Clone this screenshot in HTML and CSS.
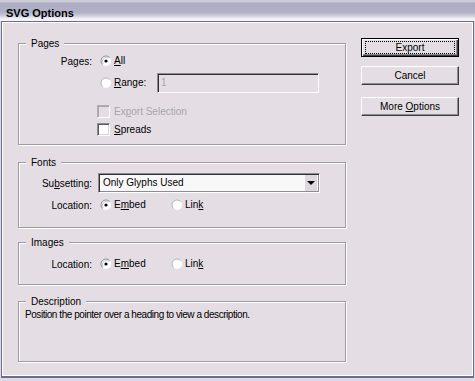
FILE: index.html
```html
<!DOCTYPE html>
<html>
<head>
<meta charset="utf-8">
<title>SVG Options</title>
<link rel="stylesheet" href="styles.css">
</head>
<body>
<div class="window">
  <div class="titlebar">SVG Options</div>
  <div class="frame">
    <div class="main">
      <fieldset class="group g-pages">
        <legend>Pages</legend>
        <div class="row h16">
          <span class="lbl">Pages:</span>
          <span class="radio"><svg width="12" height="12" viewBox="0 0 12 12"><circle cx="6" cy="6" r="5" fill="#fff"/><path d="M2.46 9.54 A5 5 0 0 1 9.54 2.46" fill="none" stroke="#8c8a92" stroke-width="1"/><path d="M3.2 8.8 A4 4 0 0 1 8.8 3.2" fill="none" stroke="#c8c6cc" stroke-width="1"/><circle cx="6" cy="6" r="1.6" fill="#000"/></svg></span>
          <span class="txt"><u>A</u>ll</span>
        </div>
        <div class="row h20 ind-radio range">
          <span class="radio"><svg width="12" height="12" viewBox="0 0 12 12"><circle cx="6" cy="6" r="5" fill="#fff"/><path d="M2.46 9.54 A5 5 0 0 1 9.54 2.46" fill="none" stroke="#b4b2b8" stroke-width="1"/></svg></span>
          <span class="txt rangelbl"><u>R</u>ange:</span>
          <span class="field">1</span>
        </div>
        <div class="row h13 ind-cb cb-first disabled">
          <span class="cb off"></span>
          <span class="txt">Ex<u>p</u>ort Selection</span>
        </div>
        <div class="row h13 ind-cb cb-second">
          <span class="cb"></span>
          <span class="txt"><u>S</u>preads</span>
        </div>
      </fieldset>

      <fieldset class="group g-fonts">
        <legend>Fonts</legend>
        <div class="row h20">
          <span class="lbl lbl-select">Su<u>b</u>setting:</span>
          <div class="select">
            <span class="select-text">Only Glyphs Used</span>
            <span class="select-btn"><span class="arrow"></span></span>
          </div>
        </div>
        <div class="row h16 loc-row">
          <span class="lbl">Location:</span>
          <span class="radio"><svg width="12" height="12" viewBox="0 0 12 12"><circle cx="6" cy="6" r="5" fill="#fff"/><path d="M2.46 9.54 A5 5 0 0 1 9.54 2.46" fill="none" stroke="#8c8a92" stroke-width="1"/><path d="M3.2 8.8 A4 4 0 0 1 8.8 3.2" fill="none" stroke="#c8c6cc" stroke-width="1"/><circle cx="6" cy="6" r="1.6" fill="#000"/></svg></span>
          <span class="txt embed">E<u>m</u>bed</span>
          <span class="radio"><svg width="12" height="12" viewBox="0 0 12 12"><circle cx="6" cy="6" r="5" fill="#fff"/><path d="M2.46 9.54 A5 5 0 0 1 9.54 2.46" fill="none" stroke="#b4b2b8" stroke-width="1"/></svg></span>
          <span class="txt">Lin<u>k</u></span>
        </div>
      </fieldset>

      <fieldset class="group g-images">
        <legend>Images</legend>
        <div class="row h16">
          <span class="lbl">Location:</span>
          <span class="radio"><svg width="12" height="12" viewBox="0 0 12 12"><circle cx="6" cy="6" r="5" fill="#fff"/><path d="M2.46 9.54 A5 5 0 0 1 9.54 2.46" fill="none" stroke="#8c8a92" stroke-width="1"/><path d="M3.2 8.8 A4 4 0 0 1 8.8 3.2" fill="none" stroke="#c8c6cc" stroke-width="1"/><circle cx="6" cy="6" r="1.6" fill="#000"/></svg></span>
          <span class="txt embed">E<u>m</u>bed</span>
          <span class="radio"><svg width="12" height="12" viewBox="0 0 12 12"><circle cx="6" cy="6" r="5" fill="#fff"/><path d="M2.46 9.54 A5 5 0 0 1 9.54 2.46" fill="none" stroke="#b4b2b8" stroke-width="1"/></svg></span>
          <span class="txt">Lin<u>k</u></span>
        </div>
      </fieldset>

      <fieldset class="group g-desc">
        <legend>Description</legend>
        <p class="desc">Position the pointer over a heading to view a description.</p>
      </fieldset>
    </div>

    <div class="buttons">
      <div class="btn default"><div class="focus">Export</div></div>
      <div class="btn cancel">Cancel</div>
      <div class="btn more"><span>More <u>O</u>ptions</span></div>
    </div>
  </div>
</div>
</body>
</html>
```
FILE: styles.css
```css
html, body {
  margin: 0;
  padding: 0;
}
body {
  background: #dedae4;
  font-family: "Liberation Sans", Arial, sans-serif;
  font-size: 10px;
  color: #000;
}
.window {
  width: 475px;
  height: 381px;
  display: flex;
  flex-direction: column;
}
.titlebar {
  height: 21px;
  box-sizing: border-box;
  padding: 5px 0 0 6px;
  font-size: 11px;
  font-weight: bold;
  line-height: 16px;
  color: #000;
  background: linear-gradient(to bottom,
    #cbcbd6 0px, #cbcbd6 2px,
    #acacc2 3px, #b0b0c6 12px,
    #c6c6d5 15px, #dcdce6 17px,
    #f4f4f8 19px, #f4f4f8 21px);
}
.frame {
  margin: 0 1px;
  height: 357px;
  box-sizing: border-box;
  border: 1px solid #6c6c8c;
  border-bottom-width: 2px;
  box-shadow: inset 1px 1px 0 #fff, inset -1px -1px 0 #fff;
  background: #e4dee4;
  display: flex;
  padding: 15px 0 0 16px;
}
.main {
  width: 328px;
  display: flex;
  flex-direction: column;
}
.group {
  margin: 0;
  padding: 0;
  min-width: 0;
  border: 1px solid #9e9ba2;
  box-shadow: 1px 1px 0 #fff, inset 1px 1px 0 #fff;
}
.group legend {
  margin-left: 7px;
  padding: 0 5px;
  height: 13px;
  line-height: 13px;
  background: #e4dee4;
}
.g-pages { padding: 3px 0 8px; }
.g-fonts { margin-top: 11px; padding: 4px 0 14px; }
.g-fonts .loc-row { margin-top: 4px; }
.g-images { margin-top: 8px; padding: 7px 0 12px; }
.g-desc { margin-top: 10px; padding: 1px 0 40px; }

.row {
  display: flex;
  align-items: center;
  white-space: nowrap;
}
.h16 { height: 16px; }
.h20 { height: 20px; }
.h13 { height: 13px; }
.range { margin-top: 4px; }
.cb-first { margin-top: 12px; }
.cb-second { margin-top: 5px; }
.ind-radio { padding-left: 81px; }
.ind-cb { padding-left: 78px; }

.lbl {
  width: 73px;
  text-align: right;
  margin-right: 8px;
  flex: none;
}
.lbl-select { margin-right: 6px; }
.radio {
  width: 12px;
  height: 12px;
  flex: none;
  display: block;
  margin-right: 2px;
}
.radio svg { display: block; }
.txt { line-height: 12px; }
.rangelbl { width: 43px; }
.embed { width: 57px; }

.field {
  width: 162px;
  height: 20px;
  box-sizing: border-box;
  border: 1px solid;
  border-color: #8c8a92 #fff #fff #8c8a92;
  box-shadow: inset 1px 1px 0 #303030;
  color: #a8a4ac;
  padding-left: 3px;
  line-height: 18px;
}
.cb {
  width: 13px;
  height: 13px;
  box-sizing: border-box;
  flex: none;
  border: 1px solid;
  border-color: #8c8a92 #fff #fff #8c8a92;
  box-shadow: inset 1px 1px 0 #5a5860, inset -1px -1px 0 #d8d4dc;
  background: #fff;
  margin-right: 4px;
}
.cb.off {
  background: #e4dee4;
  border-color: #b0aeb4 #fff #fff #b0aeb4;
  box-shadow: inset 1px 1px 0 #a8a6ac;
}
.disabled .txt { color: #a8a4ac; }

.select {
  width: 222px;
  height: 20px;
  box-sizing: border-box;
  border: 1px solid;
  border-color: #8c8a92 #fff #fff #8c8a92;
  box-shadow: inset 1px 1px 0 #303030, inset -1px -1px 0 #8c8a92;
  background: #f8f8f8;
  display: flex;
  padding: 1px 2px 1px 1px;
}
.select-text {
  flex: 1;
  padding-left: 3px;
  line-height: 16px;
}
.select-btn {
  width: 12px;
  background: #dcd8de;
  display: flex;
  align-items: center;
  justify-content: center;
}
.arrow {
  width: 0;
  height: 0;
  border-left: 4px solid transparent;
  border-right: 4px solid transparent;
  border-top: 4px solid #000;
}

.desc {
  margin: 0;
  padding-left: 6px;
  line-height: 12px;
  letter-spacing: -0.45px;
}

.buttons {
  margin-left: 15px;
  padding-top: 1px;
  width: 98px;
  display: flex;
  flex-direction: column;
}
.btn {
  height: 19px;
  box-sizing: border-box;
  border: 1px solid;
  border-color: #fff #404040 #404040 #fff;
  box-shadow: inset -1px -1px 0 #8c8a92;
  background: #e4dee4;
  display: flex;
  align-items: center;
  justify-content: center;
  line-height: 12px;
  white-space: nowrap;
}
.btn.default {
  border-color: #000;
  box-shadow: inset 1px 1px 0 #fff, inset -1px -1px 0 #404040, inset -2px -2px 0 #8c8a92;
  padding: 2px 3px 2px 3px;
  align-items: stretch;
  justify-content: stretch;
}
.focus {
  flex: 1;
  border: 1px dotted #000;
  display: flex;
  align-items: center;
  justify-content: center;
}
.cancel { margin-top: 9px; }
.more { margin-top: 12px; }
```
